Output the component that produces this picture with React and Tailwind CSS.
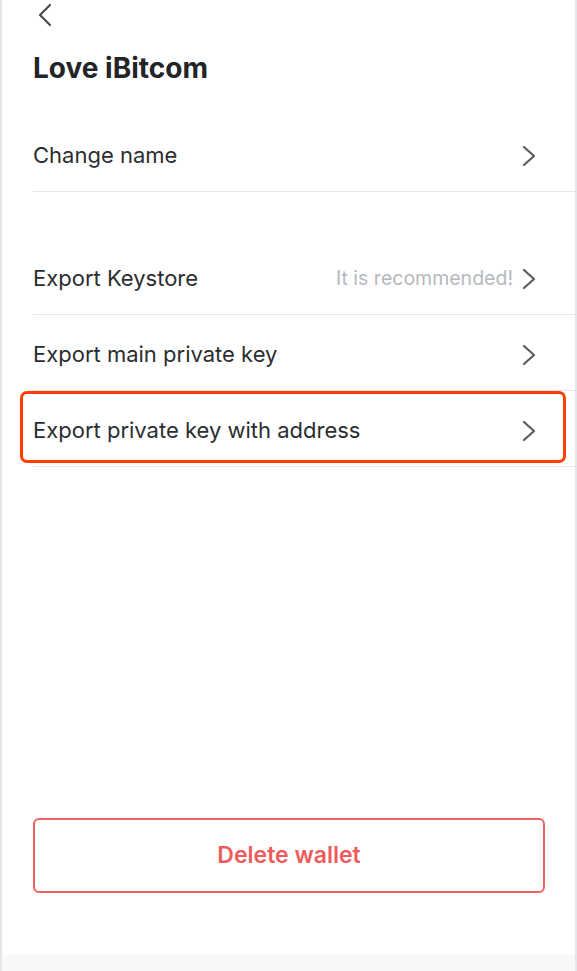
import React from "react";

const Chevron = () => (
  <svg width="16" height="22" viewBox="0 0 16 22" fill="none" className="shrink-0">
    <path d="M3 2 L13 11 L3 20" stroke="#5a5c61" strokeWidth="2.2" strokeLinecap="round" strokeLinejoin="round" />
  </svg>
);

const Row = ({ label, hint }) => (
  <div className="flex h-[76px] items-center border-b border-[#e3e6ea] pt-[4px] pr-[38px]">
    <span className="flex-1 text-[22px] text-[#2b2d31]">{label}</span>
    {hint && <span className="mr-[8px] text-[19.5px] text-[#b5b8bd]">{hint}</span>}
    <Chevron />
  </div>
);

export default function App() {
  return (
    <div
      className="relative flex h-[971px] w-[577px] flex-col overflow-hidden border-l-2 border-r-2 border-[#e3e6ea] bg-white"
      style={{ fontFamily: "Inter, 'Liberation Sans', Arial, sans-serif" }}
    >
      <div className="flex h-[30px] items-center pl-[34px]">
        <svg width="18" height="26" viewBox="0 0 18 26" fill="none">
          <path d="M14 3 L4 13 L14 23" stroke="#4a4c51" strokeWidth="2.2" strokeLinecap="round" strokeLinejoin="round" />
        </svg>
      </div>
      <h1 className="mt-[17px] pl-[31px] text-[28px] leading-[42px] font-bold text-[#222427]">Love iBitcom</h1>
      <div className="ml-[31px] mt-[27px]">
        <Row label="Change name" />
      </div>
      <div className="ml-[31px] mt-[47px]">
        <Row label="Export Keystore" hint="It is recommended!" />
        <Row label="Export main private key" />
        <Row label="Export private key with address" />
      </div>
      <div className="flex-1" />
      <div className="px-[31px]">
        <button className="flex h-[75px] w-[512px] items-center justify-center rounded-[6px] border-2 border-[#ef6161] text-[23px] font-semibold text-[#ef5b5b]">
          Delete wallet
        </button>
      </div>
      <div className="h-[62px]" />
      <div className="h-[16px] bg-[#f8f8f8]" />
      <div className="pointer-events-none absolute left-[18px] top-[391px] h-[72px] w-[546px] rounded-[7px] border-[3px] border-[#ff3d00]" />
    </div>
  );
}
